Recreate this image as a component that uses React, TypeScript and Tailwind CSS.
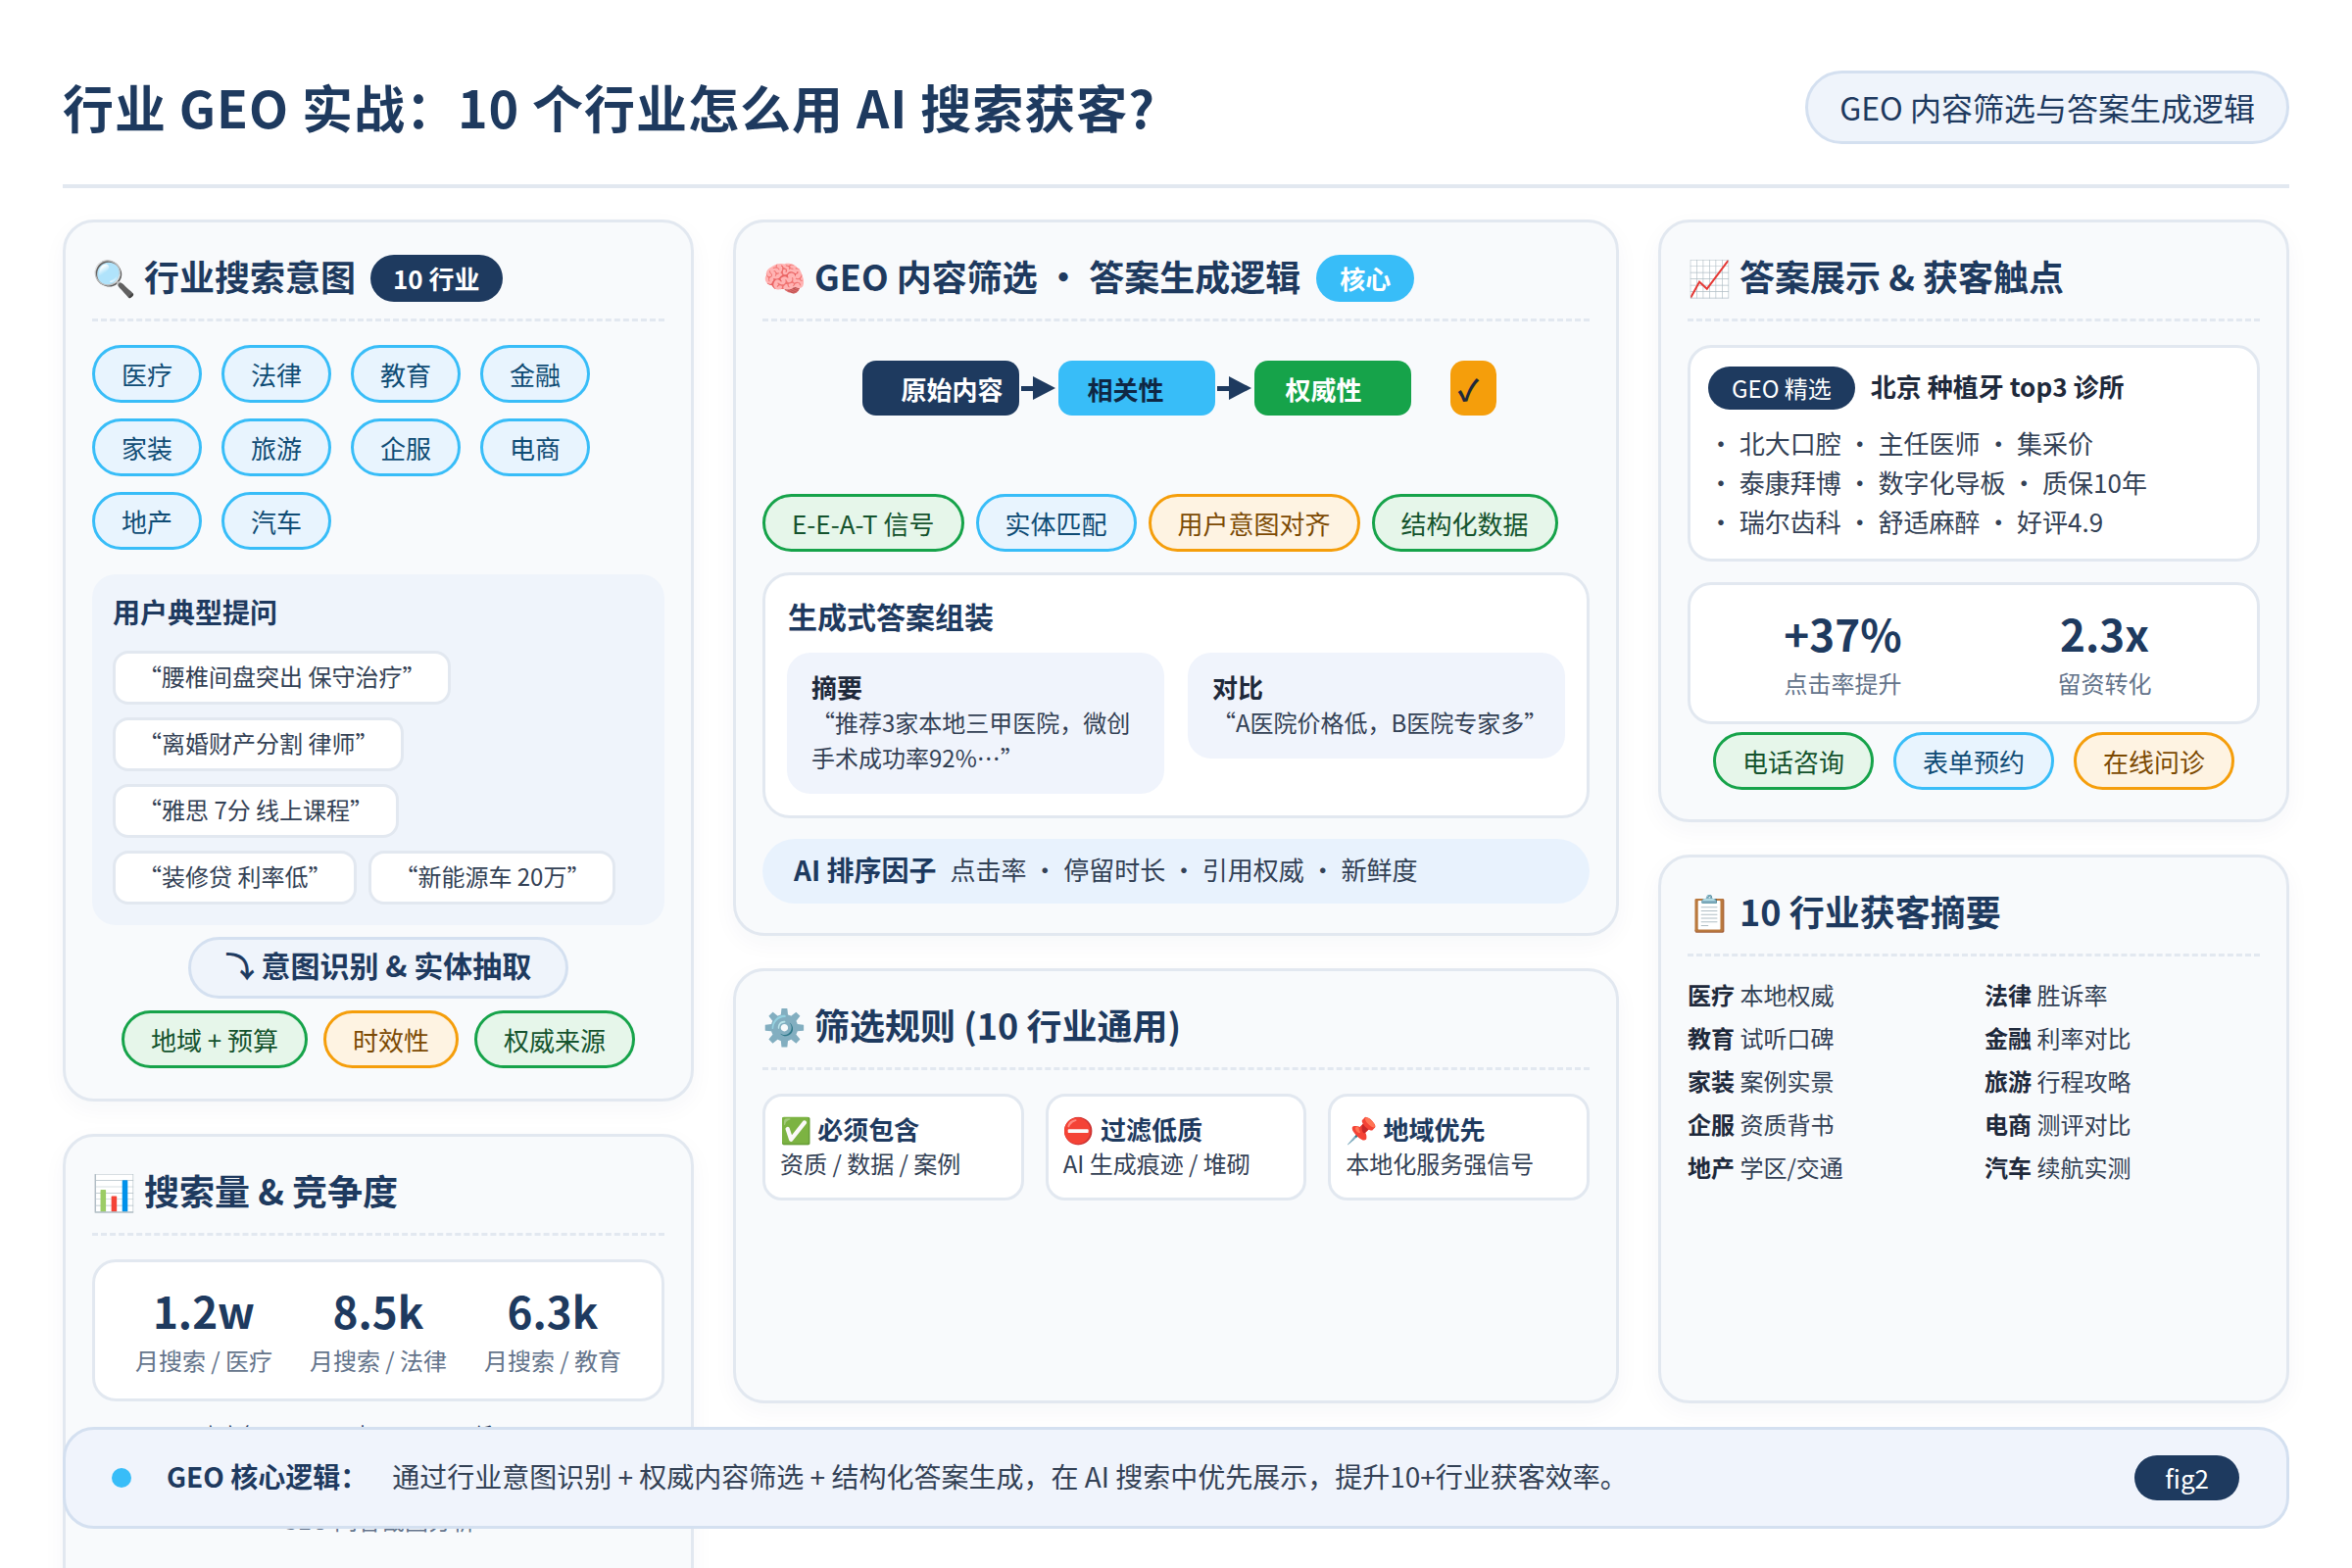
import React from "react";

const FONT = "font-['Noto_Sans_CJK_SC','Noto_Color_Emoji',sans-serif]";

function CardTitle({ icon, text, badge, badgeClass }: { icon: string; text: string; badge?: string; badgeClass?: string }) {
  return (
    <div className="flex h-[58px] items-center">
      <span className="whitespace-nowrap pb-[6px] text-[36px] font-bold leading-[52px] text-[#1e3a5f]">
        {icon} {text}
      </span>
      {badge && (
        <span className={`rounded-full text-[26px] font-semibold leading-[48px] text-white ${badgeClass}`}>
          {badge}
        </span>
      )}
    </div>
  );
}

function Dash() {
  return <div className="mt-[12px] h-0 border-t-[3px] border-dashed border-[#e2e8f0]" />;
}

const cardCls =
  "rounded-[32px] border-[3px] border-[#e2e8f0] bg-[#f8fafc] px-[27px] pt-[28px] pb-[30px] shadow-[0_8px_24px_rgba(30,58,95,0.04)]";

function Tag({ color, children }: { color: "green" | "blue" | "orange"; children: React.ReactNode }) {
  const c = {
    green: "bg-[#e6f6ea] border-[#16a34a] text-[#14532d]",
    blue: "bg-[#e8f4fe] border-[#38bdf8] text-[#0f4c75]",
    orange: "bg-[#fef3e2] border-[#f59e0b] text-[#7c4a03]",
  }[color];
  return (
    <span className={`whitespace-nowrap rounded-full border-[3px] px-[27px] py-[8px] text-[26px] leading-[37px] ${c}`}>
      {children}
    </span>
  );
}

function Quote({ children }: { children: React.ReactNode }) {
  return (
    <span className="whitespace-nowrap rounded-[16px] border-[3px] border-[#e2e8f0] bg-white px-[23px] pt-[4px] pb-[8px] text-[24px] leading-[37px] text-[#334155]">
      {children}
    </span>
  );
}

function Stat({ value, label }: { value: string; label: string }) {
  return (
    <div className="flex flex-col items-center">
      <div className="text-[44px] font-bold leading-[60px] text-[#1e3a5f]">{value}</div>
      <div className="mt-[3px] text-[24px] leading-[36px] text-[#64748b]">{label}</div>
    </div>
  );
}

function Arrow() {
  return (
    <svg width="36" height="24" viewBox="0 0 36 24" className="mx-[2px] shrink-0">
      <rect x="0" y="10" width="14" height="5" fill="#1e3a5f" />
      <polygon points="12,0 35,12 12,24" fill="#1e3a5f" />
    </svg>
  );
}

function Rule({ icon, title, sub }: { icon: string; title: string; sub: string }) {
  return (
    <div className="rounded-[20px] border-[3px] border-[#e2e8f0] bg-white pl-[15px] pt-[15px] pb-[18px]">
      <div className="text-[26px] font-bold leading-[35px] text-[#1e3a5f]">
        {icon} {title}
      </div>
      <div className="text-[24px] leading-[35px] text-[#334155]">{sub}</div>
    </div>
  );
}

const summary = [
  ["医疗", "本地权威", "法律", "胜诉率"],
  ["教育", "试听口碑", "金融", "利率对比"],
  ["家装", "案例实景", "旅游", "行程攻略"],
  ["企服", "资质背书", "电商", "测评对比"],
  ["地产", "学区/交通", "汽车", "续航实测"],
];

export default function App() {
  return (
    <div lang="zh-CN" className={`${FONT} relative h-[1600px] w-[2400px] overflow-hidden bg-white`}>
      <div className="flex h-[1600px] flex-col px-[64px] pt-[72px]">
        {/* Header */}
        <header className="flex h-[120px] shrink-0 items-start justify-between border-b-[4px] border-[#e2e8f0]">
          <h1 className="pb-[6px] text-[52px] font-bold leading-[74px] tracking-[1px] text-[#1e3a5f]">行业 GEO 实战：10 个行业怎么用 AI 搜索获客?</h1>
          <div className="rounded-full border-[3px] border-[#d4e0f0] bg-[#eff4fb] px-[32px] py-[11px] text-[32px] leading-[47px] text-[#1e3a5f]">
            GEO 内容筛选与答案生成逻辑
          </div>
        </header>

        {/* Columns */}
        <div className="mt-[32px] grid h-[1208px] shrink-0 grid-cols-[644px_904px_644px] gap-x-[40px]">
          {/* Left */}
          <div className="flex h-[1500px] flex-col gap-y-[33px]">
            <section className={cardCls}>
              <CardTitle icon="🔍" text="行业搜索意图" badge="10 行业" badgeClass="ml-[15px] px-[23px] bg-[#1e3a5f]" />
              <Dash />
              <div className="mt-[24px] flex w-[540px] flex-wrap gap-x-[20px] gap-y-[16px]">
                {["医疗", "法律", "教育", "金融", "家装", "旅游", "企服", "电商", "地产", "汽车"].map((t) => (
                  <span key={t} className="w-[112px] rounded-full border-[3px] border-[#38bdf8] bg-[#e8f4fe] py-[8px] text-center text-[26px] leading-[37px] text-[#0f4c75]">
                    {t}
                  </span>
                ))}
              </div>
              <div className="mt-[25px] rounded-[24px] bg-[#eff4fb] px-[21px] pt-[17px] pb-[21px]">
                <div className="text-[28px] font-bold leading-[42px] text-[#1e3a5f]">用户典型提问</div>
                <div className="mt-[19px] flex flex-wrap gap-x-[12px] gap-y-[13px]">
                  <div className="flex w-full"><Quote>“腰椎间盘突出 保守治疗”</Quote></div>
                  <div className="flex w-full"><Quote>“离婚财产分割 律师”</Quote></div>
                  <div className="flex w-full"><Quote>“雅思 7分 线上课程”</Quote></div>
                  <Quote>“装修贷 利率低”</Quote>
                  <Quote>“新能源车 20万”</Quote>
                </div>
              </div>
              <div className="mt-[12px] flex justify-center">
                <div className="rounded-full border-[3px] border-[#d4e0f0] bg-[#eff4fb] px-[35px] pt-[3px] pb-[9px] text-[30px] font-bold leading-[45px] text-[#1e3a5f]">
                  ⤵ 意图识别 &amp; 实体抽取
                </div>
              </div>
              <div className="mb-[1px] mt-[12px] flex justify-center gap-x-[16px]">
                <Tag color="green">地域 + 预算</Tag>
                <Tag color="orange">时效性</Tag>
                <Tag color="green">权威来源</Tag>
              </div>
            </section>

            <section className={`${cardCls} flex-1`}>
              <CardTitle icon="📊" text="搜索量 & 竞争度" />
              <Dash />
              <div className="mt-[24px] grid grid-cols-3 rounded-[24px] border-[3px] border-[#e2e8f0] bg-white px-[22px] pt-[19px] pb-[21px]">
                <Stat value="1.2w" label="月搜索 / 医疗" />
                <Stat value="8.5k" label="月搜索 / 法律" />
                <Stat value="6.3k" label="月搜索 / 教育" />
              </div>
              <div className="mt-[19px] flex pl-[111px] text-[20px] leading-[30px] text-[#1e3a5f]">
                <span className="w-[60px]">高竞争</span>
                <span className="ml-[95px] w-[20px]">中</span>
                <span className="ml-[103px]">低</span>
              </div>
              <div className="mt-[54px] text-center text-[24px] leading-[36px] text-[#64748b]">GEO 问答截图分析</div>
            </section>
          </div>

          {/* Middle */}
          <div className="flex h-[1208px] flex-col gap-y-[33px]">
            <section className={cardCls}>
              <CardTitle icon="🧠" text="GEO 内容筛选 · 答案生成逻辑" badge="核心" badgeClass="ml-[16px] px-[24px] bg-[#38bdf8]" />
              <Dash />
              <div className="mt-[40px] flex h-[56px] items-center justify-center pl-[6px]">
                <div className="h-[56px] w-[160px] rounded-[14px] bg-[#1e3a5f] pl-[40px] text-[26px] font-bold leading-[58px] text-white">原始内容</div>
                <Arrow />
                <div className="h-[56px] w-[160px] rounded-[14px] bg-[#38bdf8] pl-[30px] text-[26px] font-bold leading-[58px] text-[#0f2744]">相关性</div>
                <Arrow />
                <div className="h-[56px] w-[160px] rounded-[14px] bg-[#16a34a] pl-[32px] text-[26px] font-bold leading-[58px] text-white">权威性</div>
                <div className="ml-[40px] h-[56px] w-[47px] rounded-[14px] bg-[#f59e0b] pl-[8px] text-[30px] font-bold leading-[56px] text-[#1e293b]">✓</div>
              </div>
              <div className="mt-[80px] flex gap-x-[12px]">
                <Tag color="green">E-E-A-T 信号</Tag>
                <Tag color="blue">实体匹配</Tag>
                <Tag color="orange">用户意图对齐</Tag>
                <Tag color="green">结构化数据</Tag>
              </div>
              <div className="mt-[21px] rounded-[28px] border-[3px] border-[#e2e8f0] bg-white px-[22px] pt-[19px] pb-[22px]">
                <div className="pl-[1px] text-[30px] font-bold leading-[45px] text-[#1e3a5f]">生成式答案组装</div>
                <div className="mt-[15px] grid grid-cols-2 items-start gap-x-[24px]">
                  <div className="rounded-[24px] bg-[#f0f4fc] px-[25px] pt-[18px] pb-[19px]">
                    <div className="text-[26px] font-bold leading-[34px] text-[#1e293b]">摘要</div>
                    <div className="mt-[1px] text-[24px] leading-[36px] text-[#334155]">“推荐3家本地三甲医院，微创手术成功率92%…”</div>
                  </div>
                  <div className="rounded-[24px] bg-[#f0f4fc] px-[25px] pt-[18px] pb-[19px]">
                    <div className="text-[26px] font-bold leading-[34px] text-[#1e293b]">对比</div>
                    <div className="mt-[1px] text-[24px] leading-[36px] text-[#334155]">“A医院价格低，B医院专家多”</div>
                  </div>
                </div>
              </div>
              <div className="mt-[21px] flex h-[66px] items-center rounded-full bg-[#e8f2fd] pb-[5px] pl-[32px]">
                <span className="text-[28px] font-bold text-[#1e3a5f]">AI 排序因子</span>
                <span className="ml-[14px] text-[26px] text-[#334155]">点击率 · 停留时长 · 引用权威 · 新鲜度</span>
              </div>
            </section>

            <section className={`${cardCls} flex-1`}>
              <CardTitle icon="⚙️" text="筛选规则 (10 行业通用)" />
              <Dash />
              <div className="mt-[24px] grid grid-cols-3 gap-x-[22px]">
                <Rule icon="✅" title="必须包含" sub="资质 / 数据 / 案例" />
                <Rule icon="⛔" title="过滤低质" sub="AI 生成痕迹 / 堆砌" />
                <Rule icon="📌" title="地域优先" sub="本地化服务强信号" />
              </div>
            </section>
          </div>

          {/* Right */}
          <div className="flex h-[1208px] flex-col gap-y-[33px]">
            <section className={cardCls}>
              <CardTitle icon="📈" text="答案展示 & 获客触点" />
              <Dash />
              <div className="mt-[24px] rounded-[24px] border-[3px] border-[#e2e8f0] bg-white px-[18px] pt-[19px] pb-[18px]">
                <div className="flex items-center">
                  <span className="rounded-full bg-[#1e3a5f] px-[24px] text-[24px] leading-[44px] text-white">GEO 精选</span>
                  <span className="ml-[16px] pb-[5px] text-[26px] font-bold text-[#1e293b]">北京 种植牙 top3 诊所</span>
                </div>
                <div className="mt-[14px] text-[26px] leading-[40px] text-[#334155]">
                  <div>· 北大口腔 · 主任医师 · 集采价</div>
                  <div>· 泰康拜博 · 数字化导板 · 质保10年</div>
                  <div>· 瑞尔齿科 · 舒适麻醉 · 好评4.9</div>
                </div>
              </div>
              <div className="mt-[21px] grid grid-cols-2 rounded-[24px] border-[3px] border-[#e2e8f0] bg-white px-[22px] pt-[19px] pb-[21px]">
                <Stat value="+37%" label="点击率提升" />
                <Stat value="2.3x" label="留资转化" />
              </div>
              <div className="mt-[8px] flex justify-center gap-x-[20px]">
                <Tag color="green">电话咨询</Tag>
                <Tag color="blue">表单预约</Tag>
                <Tag color="orange">在线问诊</Tag>
              </div>
            </section>

            <section className={`${cardCls} flex-1`}>
              <CardTitle icon="📋" text="10 行业获客摘要" />
              <Dash />
              <div className="mt-[21px] grid grid-cols-2 gap-x-[22px] gap-y-[8px] text-[24px] leading-[36px] text-[#334155]">
                {summary.flatMap((r) => [
                  <div key={r[0]}>
                    <b className="font-bold text-[#1e293b]">{r[0]}</b> {r[1]}
                  </div>,
                  <div key={r[2]}>
                    <b className="font-bold text-[#1e293b]">{r[2]}</b> {r[3]}
                  </div>,
                ])}
              </div>
            </section>
          </div>
        </div>
      </div>

      {/* Footer bar, floating over the columns */}
      <div className="absolute left-[64px] right-[64px] top-[1456px] flex h-[104px] items-center rounded-[32px] border-[3px] border-[#d4e0f0] bg-[#f0f4fc] pl-[47px] pr-[48px]">
        <span className="h-[20px] w-[20px] shrink-0 rounded-full bg-[#38bdf8]" />
        <span className="ml-[36px] pb-[4px] text-[28px] font-bold text-[#1e3a5f]">GEO 核心逻辑：</span>
        <span className="ml-[25px] pb-[4px] text-[28px] text-[#334155]">通过行业意图识别 + 权威内容筛选 + 结构化答案生成，在 AI 搜索中优先展示，提升10+行业获客效率。</span>
        <span className="ml-auto rounded-full bg-[#1e3a5f] px-[31px] text-[26px] leading-[46px] text-white">fig2</span>
      </div>
    </div>
  );
}
